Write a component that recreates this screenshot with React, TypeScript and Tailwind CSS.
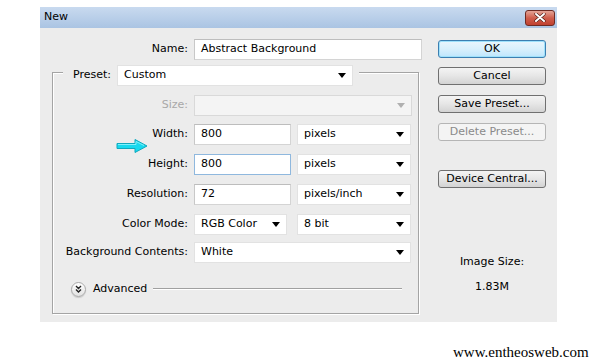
import React from "react";

const font = { fontFamily: '"DejaVu Sans", Verdana, sans-serif' };

function Arrow({ disabled }: { disabled?: boolean }) {
  return (
    <svg width="8" height="5" viewBox="0 0 8 5" className="shrink-0">
      <path d="M0 0 L8 0 L4 5 Z" fill={disabled ? "#b0b0b0" : "#000"} />
    </svg>
  );
}

function Select({ value, w, disabled }: { value: string; w: string; disabled?: boolean }) {
  return (
    <div
      className={`${w} h-[21px] flex items-center justify-between pl-[6px] pr-[6px] border ${
        disabled ? "bg-[#f4f4f4] border-[#d9d9d9]" : "bg-white border-[#e2e2e2]"
      }`}
    >
      <span>{value}</span>
      <Arrow disabled={disabled} />
    </div>
  );
}

function Input({ value, w, focused }: { value: string; w: string; focused?: boolean }) {
  return (
    <div
      className={`${w} h-[21px] flex items-center pl-[6px] bg-white border ${
        focused ? "border-[#8fb8de]" : "border-[#d4d4d4] border-t-[#bdbdbd] border-l-[#c8c8c8]"
      }`}
    >
      {value}
    </div>
  );
}

function Row({ label, mt, children, dim }: { label: string; mt: string; children: React.ReactNode; dim?: boolean }) {
  return (
    <div className={`flex items-center ${mt}`}>
      <div className={`w-[141px] text-right pr-[6px] ${dim ? "text-[#a8a8a8]" : ""}`}>{label}</div>
      <div className="flex items-center">{children}</div>
    </div>
  );
}

function Button({ label, mt, primary, disabled }: { label: string; mt: string; primary?: boolean; disabled?: boolean }) {
  let cls = "border-[#707070] bg-gradient-to-b from-[#f4f4f4] via-[#e6e6e6] to-[#d3d3d3]";
  if (primary) cls = "border-[#3c7fb1] bg-gradient-to-b from-[#eaf6fd] via-[#d9f0fc] to-[#bee6fd] shadow-[inset_0_0_0_1px_#9fe1fb]";
  if (disabled) cls = "border-[#b5b5b5] bg-[#f4f4f4] text-[#8a8a8a]";
  return (
    <div className={`${mt} w-[108px] h-[18px] rounded-[3px] border flex items-center justify-center ${cls}`}>
      {label}
    </div>
  );
}

export default function App() {
  return (
    <div className="w-[600px] h-[363px] bg-white text-[11px] text-black overflow-hidden" style={font}>
      <div className="ml-[40px] pt-[7px]">
        <div className="w-[517px] h-[315px] bg-[#ececec] flex flex-col">
          {/* title bar */}
          <div className="h-[21px] bg-gradient-to-b from-[#c9daef] to-[#aac4e3] flex items-center justify-between pl-[4px] pr-[2px]">
            <span>New</span>
            <div className="w-[30px] h-[16px] rounded-[3px] border border-[#6e2b23] bg-gradient-to-b from-[#e3a497] via-[#cf5e4d] to-[#c0402f] flex items-center justify-center">
              <svg width="12" height="9" viewBox="0 0 12 9">
                <path d="M2 1 L10 8 M10 1 L2 8" stroke="#4a1a14" strokeWidth="3.2" strokeLinecap="round" />
                <path d="M2 1 L10 8 M10 1 L2 8" stroke="#fff" strokeWidth="2" strokeLinecap="round" />
              </svg>
            </div>
          </div>

          <div className="flex flex-1">
            {/* left column */}
            <div className="w-[398px] flex flex-col">
              <div className="flex items-center mt-[11px]">
                <div className="w-[154px] text-right pr-[6px]">Name:</div>
                <Input value="Abstract Background" w="w-[228px]" />
              </div>

              <div className="relative ml-[12px] mt-[12px] w-[367px] h-[242px] border border-[#a4a4a4] shadow-[1px_1px_0_#fff,inset_1px_1px_0_#fff]">
                <div className="-mt-[8px] ml-[10px] w-fit bg-[#ececec] flex items-center pl-[10px] pr-[6px]">
                  <span className="w-[40px]">Preset:</span>
                  <div className="ml-[4px]">
                    <Select value="Custom" w="w-[236px]" />
                  </div>
                </div>

                <Row label="Size:" mt="mt-[9px]" dim>
                  <Select value="" w="w-[218px]" disabled />
                </Row>
                <Row label="Width:" mt="mt-[8px]">
                  <Input value="800" w="w-[97px]" />
                  <div className="ml-[6px]"><Select value="pixels" w="w-[114px]" /></div>
                </Row>
                <Row label="Height:" mt="mt-[9px]">
                  <Input value="800" w="w-[97px]" focused />
                  <div className="ml-[6px]"><Select value="pixels" w="w-[114px]" /></div>
                </Row>
                <Row label="Resolution:" mt="mt-[9px]">
                  <Input value="72" w="w-[97px]" />
                  <div className="ml-[6px]"><Select value="pixels/inch" w="w-[114px]" /></div>
                </Row>
                <Row label="Color Mode:" mt="mt-[9px]">
                  <Select value="RGB Color" w="w-[93px]" />
                  <div className="ml-[10px]"><Select value="8 bit" w="w-[114px]" /></div>
                </Row>
                <Row label="Background Contents:" mt="mt-[7px]">
                  <Select value="White" w="w-[217px]" />
                </Row>

                <div className="flex items-center mt-[18px] ml-[18px]">
                  <div className="w-[15px] h-[15px] rounded-full border border-[#a9a9a9] bg-gradient-to-b from-white to-[#e2e2e2] shadow-[0_1px_1px_#c8c8c8] flex items-center justify-center">
                    <svg width="7" height="8" viewBox="0 0 7 8">
                      <path d="M1 1 L3.5 3.5 L6 1 M1 4.5 L3.5 7 L6 4.5" stroke="#222" strokeWidth="1.4" fill="none" />
                    </svg>
                  </div>
                  <span className="ml-[7px]">Advanced</span>
                  <div className="ml-[6px] w-[249px] h-[2px] border-t border-[#a0a0a0] border-b border-b-white" />
                </div>

                {/* annotation arrow */}
                <svg className="absolute left-[63px] top-[66px]" width="32" height="14" viewBox="0 0 32 14">
                  <path d="M1 4.5 L19 4.5 L19 0.5 L31 7 L19 13.5 L19 9.5 L1 9.5 Z" fill="#17d9ee" stroke="#0fa8bd" strokeWidth="1" />
                  <path d="M2 5.5 L20 5.5 L20 2.5 L28 6.5" stroke="#7ff0fb" strokeWidth="1" fill="none" />
                </svg>
              </div>
            </div>

            {/* right column */}
            <div className="w-[108px] flex flex-col items-center">
              <Button label="OK" mt="mt-[12px]" primary />
              <Button label="Cancel" mt="mt-[9px]" />
              <Button label="Save Preset..." mt="mt-[10px]" />
              <Button label="Delete Preset..." mt="mt-[10px]" disabled />
              <Button label="Device Central..." mt="mt-[29px]" />
              <div className="mt-[67px] leading-[14px]">Image Size:</div>
              <div className="mt-[11px] leading-[14px]">1.83M</div>
            </div>
          </div>
        </div>
      </div>
      <div
        className="mt-[22px] pl-[453px] text-[15px] leading-[17px]"
        style={{ fontFamily: '"Liberation Serif", "Times New Roman", serif' }}
      >
        www.entheosweb.com
      </div>
    </div>
  );
}
